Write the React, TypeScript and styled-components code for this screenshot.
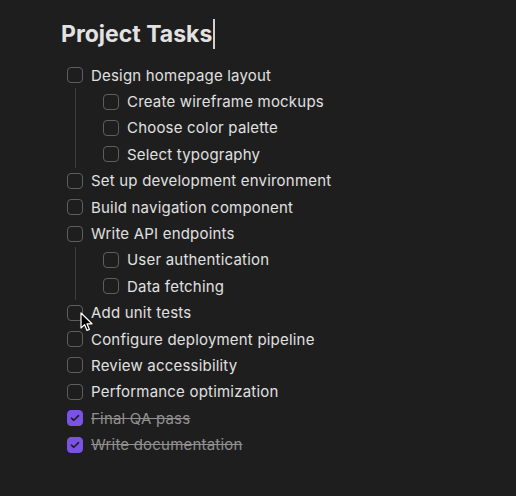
import React from "react";
import styled, { createGlobalStyle } from "styled-components";

const Global = createGlobalStyle`
  html, body { margin: 0; padding: 0; background: #1e1e1e; }
  body { font-family: Inter, "Noto Sans", sans-serif; -webkit-font-smoothing: antialiased; }
`;

const Page = styled.div`
  position: relative;
  width: 516px;
  height: 496px;
  box-sizing: border-box;
  padding: 16px 0 0 61px;
  background: #1e1e1e;
  color: #dcdcdc;
`;

const Title = styled.h1`
  margin: 0 0 10px 0;
  font-size: 23px;
  line-height: 36px;
  font-weight: 700;
  color: #e2e2e2;
  letter-spacing: 0;
  display: flex;
  align-items: center;
`;

const Caret = styled.span`
  display: inline-block;
  width: 1.5px;
  height: 30px;
  background: #d0d0d0;
  margin-left: 1px;
`;

const List = styled.div`
  padding-left: 6px;
  display: flex;
  flex-direction: column;
`;

const Row = styled.div`
  display: flex;
  align-items: center;
  gap: 8px;
  height: 26.4px;
  font-size: 15px;
  letter-spacing: 0.2px;
`;

const Box = styled.span<{ $checked?: boolean }>`
  box-sizing: border-box;
  width: 16px;
  height: 16px;
  flex: none;
  border-radius: 4px;
  border: 1px solid ${(p) => (p.$checked ? "#7b52e6" : "#5e5e5e")};
  background: ${(p) => (p.$checked ? "#7b52e6" : "transparent")};
  display: flex;
  align-items: center;
  justify-content: center;
`;

const Label = styled.span<{ $done?: boolean }>`
  color: ${(p) => (p.$done ? "#909090" : "#e0e0e0")};
  text-decoration: ${(p) => (p.$done ? "line-through" : "none")};
  text-decoration-color: #909090;
`;

const Children = styled.div`
  margin-left: 8px;
  border-left: 1px solid #3e3e3e;
  padding-left: 27px;
  display: flex;
  flex-direction: column;
`;

const Pointer = styled.svg`
  position: absolute;
  left: 80px;
  top: 312px;
  pointer-events: none;
`;

type Task = { text: string; done?: boolean; children?: Task[] };

const tasks: Task[] = [
  {
    text: "Design homepage layout",
    children: [
      { text: "Create wireframe mockups" },
      { text: "Choose color palette" },
      { text: "Select typography" },
    ],
  },
  { text: "Set up development environment" },
  { text: "Build navigation component" },
  {
    text: "Write API endpoints",
    children: [{ text: "User authentication" }, { text: "Data fetching" }],
  },
  { text: "Add unit tests" },
  { text: "Configure deployment pipeline" },
  { text: "Review accessibility" },
  { text: "Performance optimization" },
  { text: "Final QA pass", done: true },
  { text: "Write documentation", done: true },
];

const Check = () => (
  <svg width="10" height="8" viewBox="0 0 10 8">
    <path d="M1.5 4.2 L3.8 6.3 L8.5 1.6" fill="none" stroke="#1e1e1e" strokeWidth="1.6" strokeLinecap="round" strokeLinejoin="round" />
  </svg>
);

const Item: React.FC<{ task: Task }> = ({ task }) => (
  <>
    <Row>
      <Box $checked={task.done}>{task.done && <Check />}</Box>
      <Label $done={task.done}>{task.text}</Label>
    </Row>
    {task.children && (
      <Children>
        {task.children.map((c) => (
          <Item key={c.text} task={c} />
        ))}
      </Children>
    )}
  </>
);

export default function App() {
  return (
    <>
      <Global />
      <Page>
        <Title>
          Project Tasks
          <Caret />
        </Title>
        <List>
          {tasks.map((t) => (
            <Item key={t.text} task={t} />
          ))}
        </List>
        <Pointer width="13" height="20" viewBox="0 0 13 20">
          <path d="M1 1 L1 16 L4.6 12.6 L7 18.4 L9.4 17.4 L7 11.8 L12 11.8 Z" fill="#000" stroke="#fff" strokeWidth="1.2" strokeLinejoin="round" />
        </Pointer>
      </Page>
    </>
  );
}
